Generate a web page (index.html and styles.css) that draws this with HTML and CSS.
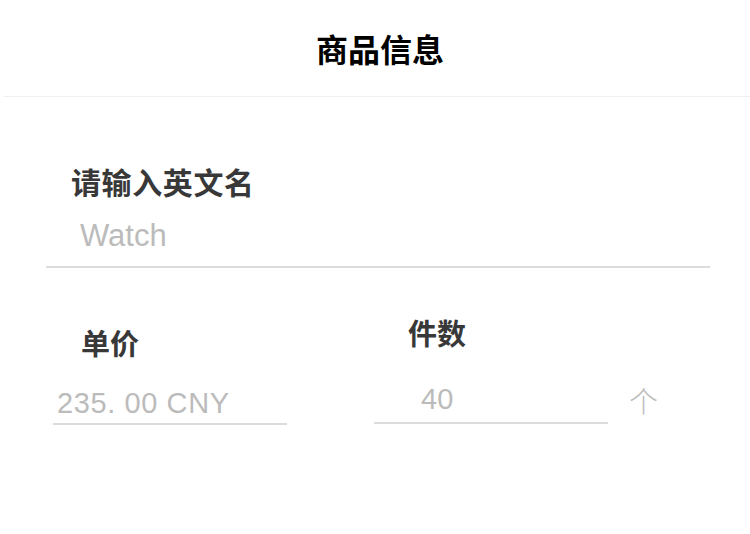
FILE: index.html
```html
<!DOCTYPE html>
<html lang="zh-CN">
<head>
<meta charset="utf-8">
<title>商品信息</title>
<link rel="stylesheet" href="styles.css">
</head>
<body>
<header class="header">
  <h1 class="title">商品信息</h1>
</header>
<main class="form">
  <section class="field field-name">
    <div class="label label-name">请输入英文名</div>
    <div class="value value-name">Watch</div>
  </section>
  <section class="row">
    <div class="col col-price">
      <div class="label label-price">单价</div>
      <div class="value value-price">235. 00 CNY</div>
    </div>
    <div class="col-qty-wrap">
      <div class="col col-qty">
        <div class="label label-qty">件数</div>
        <div class="value value-qty">40</div>
      </div>
      <div class="unit">个</div>
    </div>
  </section>
</main>
</body>
</html>
```

FILE: styles.css
```css
html, body {
  margin: 0;
  padding: 0;
  background: #ffffff;
}

body {
  width: 750px;
  height: 534px;
  overflow: hidden;
  font-family: "Liberation Sans", "Noto Sans CJK SC", sans-serif;
}

.header {
  margin-left: 4px;
  height: 96px;
  border-bottom: 1px solid #efefef;
  display: flex;
  align-items: center;
  justify-content: center;
  padding-left: 6px;
}

.title {
  margin: 0;
  font-family: "Noto Sans CJK SC", sans-serif;
  font-weight: 700;
  font-size: 32px;
  line-height: 40px;
  color: #000000;
}

.label {
  font-family: "Noto Sans CJK SC", sans-serif;
  font-weight: 700;
  font-size: 29px;
  line-height: 40px;
  color: #383838;
}

.value {
  font-family: "Liberation Sans", "Noto Sans CJK SC", sans-serif;
  color: #bbbbbb;
  line-height: 40px;
  border-bottom: 2px solid #dcdcdc;
}

.field-name {
  margin: 64px 40px 0 46px;
}

.label-name {
  padding-left: 25px;
  font-size: 30px;
  letter-spacing: 0.6px;
}

.value-name {
  margin-top: 15px;
  padding-left: 34px;
  padding-bottom: 10px;
  font-size: 31px;
}

.row {
  display: flex;
  align-items: flex-start;
  padding-top: 44px;
}

.col {
  width: 234px;
}

.col-price {
  margin-left: 53px;
  margin-top: 10px;
}

.label-price {
  padding-left: 28px;
}

.value-price {
  margin-top: 21px;
  padding-left: 4px;
  font-size: 29px;
  letter-spacing: 0.6px;
}

.col-qty-wrap {
  margin-left: 87px;
  display: flex;
  align-items: flex-end;
}

.label-qty {
  padding-left: 34px;
}

.value-qty {
  margin-top: 27px;
  padding-left: 47px;
  padding-bottom: 3px;
  font-size: 29px;
}

.unit {
  margin-left: 21px;
  margin-bottom: 4px;
  font-family: "Noto Sans CJK SC", sans-serif;
  font-weight: 300;
  font-size: 29px;
  line-height: 40px;
  color: #bbbbbb;
}
```
